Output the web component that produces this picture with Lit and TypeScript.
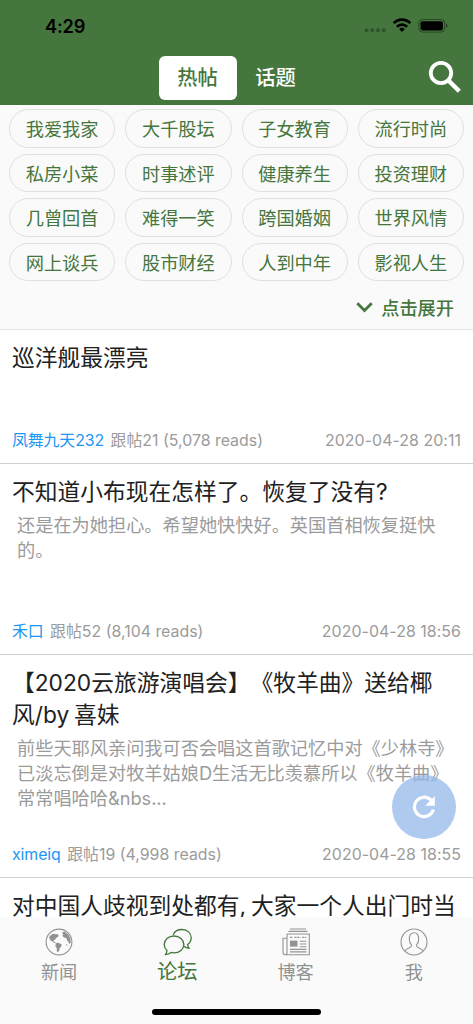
import { LitElement, html, css, svg, nothing } from "lit";
import { customElement, property } from "lit/decorators.js";

interface Post {
  title: string;
  preview: string;
  author: string;
  stats: string;
  time: string;
}

const TOPICS = [
  "我爱我家", "大千股坛", "子女教育", "流行时尚",
  "私房小菜", "时事述评", "健康养生", "投资理财",
  "几曾回首", "难得一笑", "跨国婚姻", "世界风情",
  "网上谈兵", "股市财经", "人到中年", "影视人生",
];

const POSTS: Post[] = [
  { title: "巡洋舰最漂亮", preview: "", author: "凤舞九天232", stats: "跟帖21 (5,078 reads)", time: "2020-04-28 20:11" },
  { title: "不知道小布现在怎样了。恢复了没有?", preview: "还是在为她担心。希望她快快好。英国首相恢复挺快的。", author: "禾口", stats: "跟帖52 (8,104 reads)", time: "2020-04-28 18:56" },
  { title: "【2020云旅游演唱会】《牧羊曲》送给椰风/by 喜妹", preview: "前些天耶风亲问我可否会唱这首歌记忆中对《少林寺》已淡忘倒是对牧羊姑娘D生活无比羡慕所以《牧羊曲》常常唱哈哈&nbs...", author: "ximeiq", stats: "跟帖19 (4,998 reads)", time: "2020-04-28 18:55" },
  { title: "对中国人歧视到处都有, 大家一个人出门时当", preview: "", author: "", stats: "", time: "" },
];

const ICONS: Record<string, unknown> = {
  globe: svg`<circle cx="14" cy="14" r="12.9" fill="none" stroke="currentColor" stroke-width="1.1"/>
    <path fill="currentColor" d="M4.5 8.2 7 6.2l2.7-.5 1 .8 1.6-.6 1.4 1.5-.8 1.6-2 .9-.5 1.6-1.6.5-.2 1.5 1.8.8.3.9-1.7-.4-1.8-1.6-1.5-.4L4.3 10z"/>
    <path fill="currentColor" d="M10.8 15.2l2.4-.4 3.4 1.5-.3 2.3-1.6 1.5-.5 2.6-1.3 1.4-1-.4-.1-3.4-1.4-2.1z"/>
    <path fill="currentColor" d="M17 4.7l2.3-1.2 3.8 2.8 2.3 4.3.4 4-1.5 1.4-1-2.6-1.2-.8-.8-2.5-2.5-.5-1.5-1.8 1-1.3z"/>
    <path fill="currentColor" d="M20.8 16.8l1.2-.6.3 1-1 .5z"/>`,
  chat: svg`<g fill="none" stroke="currentColor" stroke-width="1.3" stroke-linejoin="round">
    <path d="M11.2 6.9C12.3 3.7 15.8 1.5 20 1.5c5.3 0 9.2 3.6 9.2 8.3 0 2.9-1.4 5.1-3.6 6.7.1 1.6.7 2.8 1.6 3.9-2.2-.2-3.900-.8-5.200-2.100"/>
    <path d="M12 8c5.600 0 9.800 3.600 9.800 8.400s-4.200 8.400-9.800 8.400c-1.100 0-2-.1-3-.4-1.500 1.400-3.300 2-5.700 2.200 1.100-1.200 1.600-2.600 1.700-4.100C3.300 21 2.200 19 2.200 16.400 2.200 11.600 6.400 8 12 8z"/></g>`,
  news: svg`<g fill="none" stroke="currentColor" stroke-width="1.1">
    <path d="M8 1h16M6.500 3.400h19M5 6h22.300v20.700H3.500C2.100 26.700 1 25.800 1 24.500V10.200h4M5 6v18.500c0 1.300-.6 2.200-1.500 2.200"/>
    <path d="M8 9.400h3M12.500 9.400h6M20.200 9.400h4" stroke-dasharray="2 .7"/>
    <path d="M17.700 13.200h6.800M17.700 16h6.800M17.700 18.800h6.800M8 21.400h16.500M8 23.900h16.500"/></g>
    <path fill="currentColor" d="M8 12.600h7.500v6H8z"/>`,
  person: svg`<g fill="none" stroke="currentColor" stroke-width="1.1">
    <circle cx="14" cy="14" r="13"/>
    <path d="M4.800 23.200c.5-1.800 2-2.500 4.200-3.300 1.800-.7 2.600-1.100 2.600-2.700-1.600-1.600-2.300-3.700-2.300-6.200 0-4 1.900-6.200 4.700-6.200s4.700 2.200 4.700 6.200c0 2.500-.7 4.600-2.300 6.200 0 1.600.8 2 2.600 2.700 2.200.8 3.700 1.500 4.200 3.300"/></g>`,
};

const TABS = [
  { icon: "globe", label: "新闻" },
  { icon: "chat", label: "论坛", active: true },
  { icon: "news", label: "博客" },
  { icon: "person", label: "我" },
];

@customElement("status-bar")
class StatusBar extends LitElement {
  static styles = css`
    :host { display: flex; height: 52px; padding: 0 25px 0 45px; align-items: center; justify-content: space-between; color: #000; }
    .time { font-size: 18.2px; font-weight: 600; letter-spacing: -0.15px; }
    .icons { display: block; }
  `;
  render() {
    return html`<span class="time">4:29</span>
      <svg class="icons" width="84" height="16" viewBox="0 0 84 16">
        <g fill="#000" fill-opacity=".3"><circle cx="2.500" cy="12.300" r="2"/><circle cx="8.300" cy="12.300" r="2"/><circle cx="14" cy="12.300" r="2"/><circle cx="19.700" cy="12.300" r="2"/></g>
        <g fill="none" stroke="#000" stroke-width="2.700"><path d="M29.700 5.100a11.700 11.700 0 0 1 16.600 0"/><path d="M32.900 8.700a7.200 7.200 0 0 1 10.200 0"/></g>
        <path d="M38 14l-2.800-2.800a4 4 0 0 1 5.600 0z"/>
        <rect x="54.800" y="1.500" width="25.800" height="12.600" rx="3.600" fill="none" stroke="#000" stroke-opacity=".4"/>
        <rect x="56.500" y="3.200" width="22.400" height="9.200" rx="2.100"/>
        <path d="M82 5.600c2 .8 2 3.600 0 4.400z" fill-opacity=".45"/>
      </svg>`;
  }
}

@customElement("post-item")
class PostItem extends LitElement {
  @property({ attribute: false }) post!: Post;
  static styles = css`
    :host { display: block; padding: 12px 12px 10px; border-bottom: 1px solid #d2d2d2; background: #fff; }
    .title { font-size: 22.75px; line-height: 32px; color: #212121; word-spacing: -1.5px; }
    .preview { margin: 5px 7px 0 5px; height: 75px; font-size: 18.2px; line-height: 25.200px; color: #9b9b9b; }
    .meta { display: flex; margin-top: 32px; font-size: 15.900px; line-height: 24px; color: #9b9b9b; white-space: nowrap; }
    .meta.bare { margin-top: 55px; }
    .author { color: #2196f3; margin-right: 6.500px; letter-spacing: -0.1px; }
    .time { margin-left: auto; letter-spacing: 0.06px; }
  `;
  render() {
    const p = this.post;
    return html`<div class="title">${p.title}</div>
      ${p.preview ? html`<div class="preview">${p.preview}</div>` : nothing}
      ${p.author
        ? html`<div class="meta ${p.preview ? "" : "bare"}">
            <span class="author">${p.author}</span><span class="stats">${p.stats}</span><span class="time">${p.time}</span>
          </div>`
        : nothing}`;
  }
}

@customElement("app-root")
class AppRoot extends LitElement {
  static styles = css`
    :host {
      display: flex; flex-direction: column; position: relative; height: 1024px; overflow: hidden;
      background: #fff; font-family: Inter, "Noto Sans CJK SC", sans-serif; text-spacing-trim: space-all;
    }
    .header { flex: none; height: 105px; background: #44763d; }
    .nav { display: grid; grid-template-columns: 1fr auto 1fr; align-items: center; height: 52px; }
    .segments { grid-column: 2; display: flex; }
    .segment { width: 78px; height: 44px; border-radius: 6px; line-height: 44px; text-align: center; font-size: 20.300px; font-weight: 500; color: #fff; }
    .segment.on { background: #fff; color: #44763d; }
    .search { justify-self: end; margin: 0 11px 2px 0; }
    .topics { flex: none; height: 225px; background: #fafafa; border-bottom: 1px solid #e4e4e4; box-sizing: border-box; padding: 4px 9px 0; }
    .grid { display: grid; grid-template-columns: repeat(4, 1fr); gap: 6px 10px; }
    .chip { height: 38.500px; box-sizing: border-box; border: 1px solid #e0e0e0; border-radius: 20px; text-align: center; font-size: 18.200px; line-height: 38px; color: #44763d; }
    .expand { display: flex; align-items: center; justify-content: flex-end; gap: 8px; margin: 14px 10px 0 0; font-size: 18.200px; line-height: 26px; font-weight: 500; color: #44763d; }
    .expand svg { margin-bottom: 2px; }
    .feed { flex: 1; min-height: 0; overflow: hidden; }
    .tabs { flex: none; height: 107px; display: grid; grid-template-columns: repeat(4, 1fr); background: #fafafa; }
    .tab { display: flex; flex-direction: column; align-items: center; padding-top: 11px; color: #929292; }
    .tab svg { display: block; height: 28px; }
    .label { margin-top: 3px; font-size: 18.200px; line-height: 26px; }
    .tab.active { color: #44763d; }
    .tab.active .label { font-size: 20.300px; margin-top: 3px; }
    .refresh { position: absolute; left: 391.500px; top: 774.500px; width: 64px; height: 64px; border-radius: 50%; background: rgba(144, 182, 233, 0.73); display: grid; place-items: center; }
    .home { position: absolute; left: 152px; bottom: 9px; width: 169px; height: 6px; border-radius: 3px; background: #000; }
  `;
  render() {
    return html`
      <div class="header">
        <status-bar></status-bar>
        <div class="nav">
          <div class="segments"><div class="segment on">热帖</div><div class="segment">话题</div></div>
          <svg class="search" width="34" height="34" viewBox="0 0 34 34" fill="none" stroke="#fff">
            <circle cx="13" cy="13" r="10.200" stroke-width="3.800"/><path d="M20 20l11.300 11.300" stroke-width="4.400"/>
          </svg>
        </div>
      </div>
      <div class="topics">
        <div class="grid">${TOPICS.map((t) => html`<div class="chip">${t}</div>`)}</div>
        <div class="expand">
          <svg width="17" height="11" viewBox="0 0 17 11" fill="none" stroke="currentColor" stroke-width="2.800"><path d="M1.300 1.300l7.200 7.200 7.200-7.200"/></svg>
          <span>点击展开</span>
        </div>
      </div>
      <div class="feed">${POSTS.map((p) => html`<post-item .post=${p}></post-item>`)}</div>
      <div class="tabs">
        ${TABS.map((t) => html`<div class="tab ${t.active ? "active" : ""}">
          <svg width=${t.active ? 31 : 28} height="28" viewBox=${t.active ? "0 0 31 28" : "0 0 28 28"}>${ICONS[t.icon]}</svg>
          <span class="label">${t.label}</span></div>`)}
      </div>
      <div class="refresh">
        <svg width="24" height="24" viewBox="0 0 26 26"><path d="M20.800 5.700A10.500 10.500 0 1 0 23.200 15.800" fill="none" stroke="#fff" stroke-width="3.400"/><path d="M24.800 1.200v10.500H14.200z" fill="#fff"/></svg>
      </div>
      <div class="home"></div>`;
  }
}
